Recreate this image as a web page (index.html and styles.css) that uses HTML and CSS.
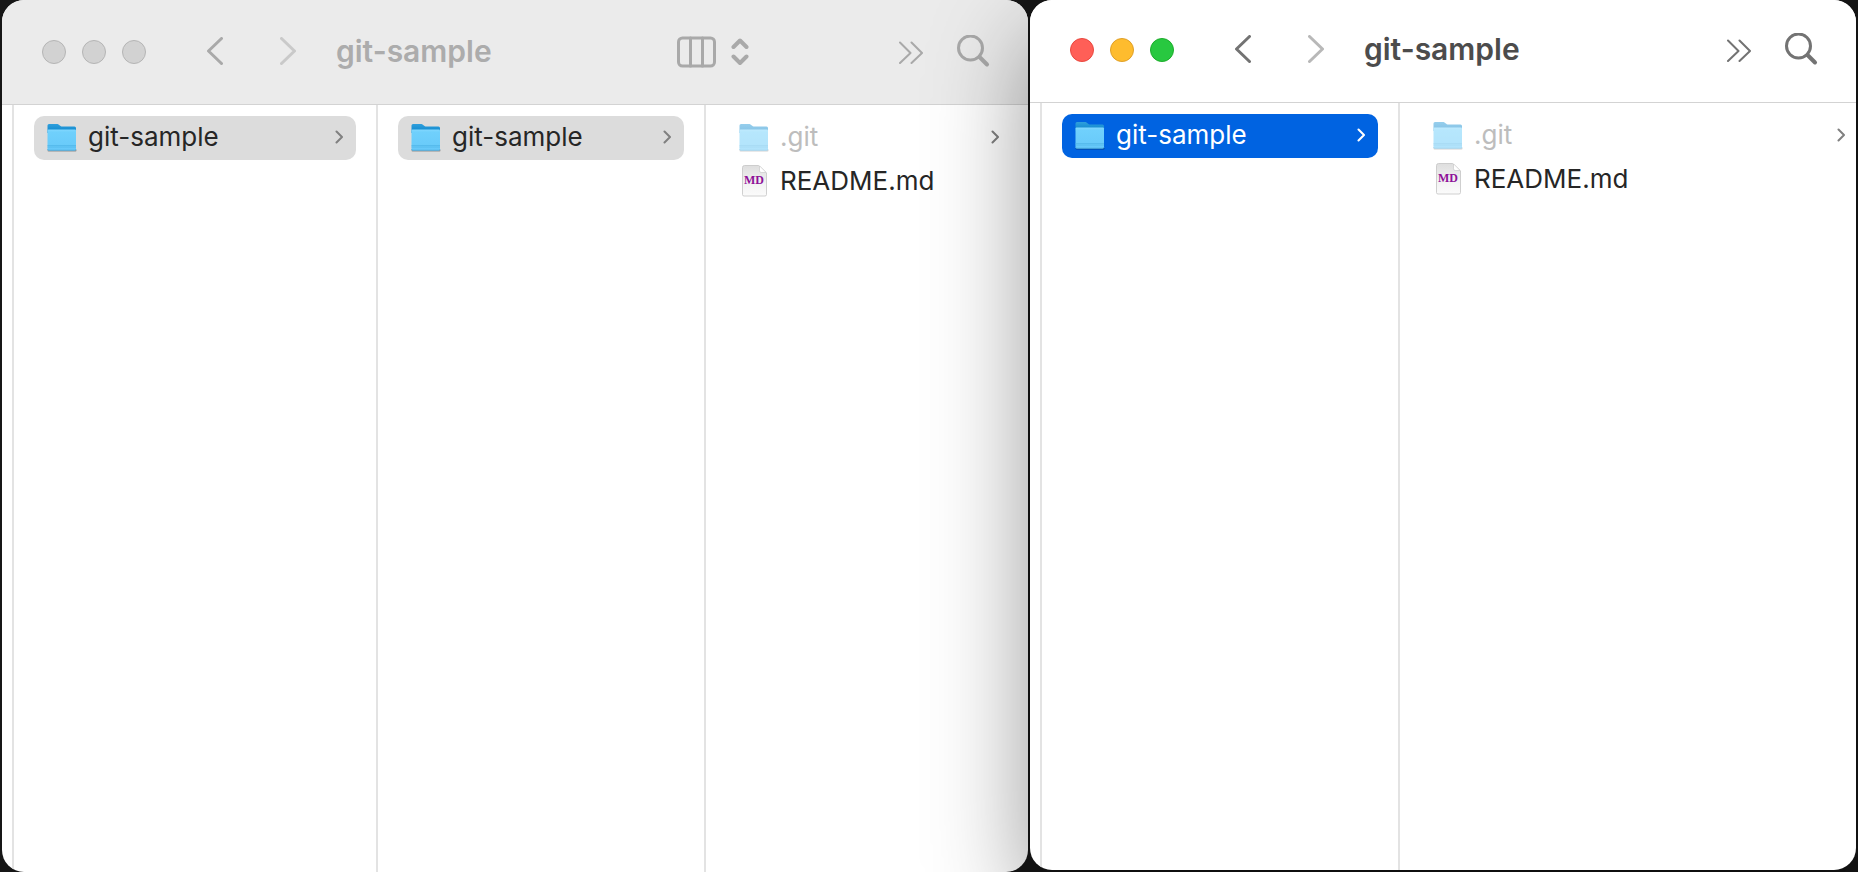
FILE: index.html
```
<!DOCTYPE html>
<html lang="en">
<head>
<meta charset="utf-8">
<meta name="viewport" content="width=device-width, initial-scale=1">
<title>git-sample</title>
<link rel="stylesheet" href="styles.css">
</head>
<body>
<svg class="defs" aria-hidden="true">
  <defs>
    <linearGradient id="folder-front" x1="0" y1="0" x2="0" y2="1">
      <stop offset="0" stop-color="#84d8fe"/>
      <stop offset="0.12" stop-color="#70d0fc"/>
      <stop offset="1" stop-color="#67c9f9"/>
    </linearGradient>
    <linearGradient id="folder-back" x1="0" y1="0" x2="0" y2="1">
      <stop offset="0" stop-color="#2f9fdc"/>
      <stop offset="1" stop-color="#0a84cb"/>
    </linearGradient>
    <linearGradient id="paper" x1="0" y1="0" x2="0" y2="1">
      <stop offset="0" stop-color="#dedede"/>
      <stop offset="0.6" stop-color="#f3f3f3"/>
      <stop offset="1" stop-color="#fbfbfb"/>
    </linearGradient>
    <symbol id="folder" viewBox="0 0 32 32">
      <path d="M2.500 29.500h27" stroke="#000" stroke-opacity=".35" stroke-width="2" stroke-linecap="round"/>
      <path d="M1.500 4.500q0-1.500 1.500-1.500h7.500c1.500 0 2 .4 3 1.300 1 .8 1.600 1.200 3 1.200H28.500q1.500 0 1.500 1.500V12H1.500z" fill="url(#folder-back)"/>
      <path d="M1.500 9.500q0-1 1-1h26.500q1 0 1 1V28q0 1.500-1.500 1.500H3q-1.500 0-1.500-1.500z" fill="url(#folder-front)"/>
      <path d="M1.500 24.500h28.500M1.500 26h28.500" stroke="#4fb4e6" stroke-width=".7"/>
      <path d="M1.500 28q0 1.200 1.500 1.200h25.500q1.500 0 1.500-1.200" fill="none" stroke="#4fb0e2" stroke-width=".8"/>
    </symbol>
    <symbol id="document" viewBox="0 0 32 32">
      <path d="M6.500 .5h14l8 7.500V29.500q0 1.500-1.500 1.500H6q-1.500 0-1.500-1.500V2.500q0-2 2-2z" fill="url(#paper)" stroke="#c4c4c4" stroke-width=".8"/>
      <path d="M21.500 .8v5q0 1.700 1.700 1.700h5z" fill="#fff" stroke="#c8c8c8" stroke-width=".7"/>
      <text x="16" y="19" text-anchor="middle" class="doc-label">MD</text>
    </symbol>
    <symbol id="chevron" viewBox="0 0 8 14">
      <path d="M1.500 1.500 7 7l-5.500 5.500"/>
    </symbol>
    <symbol id="back" viewBox="0 0 18 30">
      <path d="M15.500 1.500 2.500 14l13 12.500"/>
    </symbol>
    <symbol id="forward" viewBox="0 0 18 30">
      <path d="M2.500 1.500 15.500 14l-13 12.500"/>
    </symbol>
    <symbol id="more" viewBox="0 0 26 24">
      <path d="M2 2.500 12.500 13 2 23M13.500 2.500 24 13 13.500 23"/>
    </symbol>
    <symbol id="search" viewBox="0 0 34 34">
      <circle cx="14.500" cy="13" r="12"/>
      <path d="M23.500 22l7.500 7.500" stroke-width="4"/>
    </symbol>
    <symbol id="columns" viewBox="0 0 40 32">
      <rect x="1.500" y="2" width="36" height="28" rx="4"/>
      <path d="M13.500 2v28M25.500 2v28"/>
    </symbol>
    <symbol id="updown" viewBox="0 0 18 28">
      <path d="M2.500 9 9 2.500 15.500 9M2.500 18.500 9 25l6.500-6.500"/>
    </symbol>
  </defs>
</svg>

<main class="desktop">
  <section class="window window--inactive" aria-label="git-sample, inactive window">
    <header class="titlebar">
      <div class="lights">
        <button class="light" aria-label="Close"></button>
        <button class="light" aria-label="Minimize"></button>
        <button class="light" aria-label="Zoom"></button>
      </div>
      <div class="history">
        <button class="tool" aria-label="Back"><svg class="icon nav"><use href="#back"/></svg></button>
        <button class="tool tool--off" aria-label="Forward"><svg class="icon nav"><use href="#forward"/></svg></button>
      </div>
      <h1 class="title">git-sample</h1>
      <button class="tool view" aria-label="View as columns">
        <svg class="icon columns-icon"><use href="#columns"/></svg>
        <svg class="icon updown-icon"><use href="#updown"/></svg>
      </button>
      <div class="actions">
        <button class="tool" aria-label="More"><svg class="icon more-icon"><use href="#more"/></svg></button>
        <button class="tool" aria-label="Search"><svg class="icon search-icon"><use href="#search"/></svg></button>
      </div>
    </header>
    <div class="browser browser--three">
      <div class="column"></div>
      <div class="column">
        <a class="row row--selected" href="#"><svg class="file-icon"><use href="#folder"/></svg><span class="name">git-sample</span><svg class="icon chevron"><use href="#chevron"/></svg></a>
      </div>
      <div class="column">
        <a class="row row--selected" href="#"><svg class="file-icon"><use href="#folder"/></svg><span class="name">git-sample</span><svg class="icon chevron"><use href="#chevron"/></svg></a>
      </div>
      <div class="column column--last">
        <a class="row row--hidden" href="#"><svg class="file-icon"><use href="#folder"/></svg><span class="name">.git</span><svg class="icon chevron"><use href="#chevron"/></svg></a>
        <a class="row" href="#"><svg class="file-icon"><use href="#document"/></svg><span class="name">README.md</span></a>
      </div>
    </div>
  </section>

  <section class="window window--active" aria-label="git-sample, active window">
    <header class="titlebar">
      <div class="lights">
        <button class="light light--close" aria-label="Close"></button>
        <button class="light light--minimize" aria-label="Minimize"></button>
        <button class="light light--zoom" aria-label="Zoom"></button>
      </div>
      <div class="history">
        <button class="tool" aria-label="Back"><svg class="icon nav"><use href="#back"/></svg></button>
        <button class="tool tool--off" aria-label="Forward"><svg class="icon nav"><use href="#forward"/></svg></button>
      </div>
      <h1 class="title">git-sample</h1>
      <div class="actions">
        <button class="tool" aria-label="More"><svg class="icon more-icon"><use href="#more"/></svg></button>
        <button class="tool" aria-label="Search"><svg class="icon search-icon"><use href="#search"/></svg></button>
      </div>
    </header>
    <div class="browser browser--two">
      <div class="column"></div>
      <div class="column">
        <a class="row row--selected" href="#"><svg class="file-icon"><use href="#folder"/></svg><span class="name">git-sample</span><svg class="icon chevron"><use href="#chevron"/></svg></a>
      </div>
      <div class="column column--last">
        <a class="row row--hidden" href="#"><svg class="file-icon"><use href="#folder"/></svg><span class="name">.git</span><svg class="icon chevron"><use href="#chevron"/></svg></a>
        <a class="row" href="#"><svg class="file-icon"><use href="#document"/></svg><span class="name">README.md</span></a>
      </div>
    </div>
  </section>
</main>
</body>
</html>
```
FILE: styles.css
```
* {
  box-sizing: border-box;
}

body {
  margin: 0;
  background: #161616;
  color: #262626;
  font-family: Inter, "Liberation Sans", sans-serif;
}

.defs {
  position: absolute;
  width: 0;
  height: 0;
}

.desktop {
  display: grid;
  grid-template-columns: 1026fr 826fr;
  gap: 2px;
  min-height: 100vh;
  padding: 0 2px;
  overflow: hidden;
}

.window {
  display: flex;
  flex-direction: column;
  min-width: 0;
  overflow: hidden;
  border-radius: 22px;
  background: #fff;
  --bar-height: 105px;
  --bar-bottom: 0;
  --icon: #a9a9a9;
  --title: #acacac;
  --bar: #ebebeb;
  --selected: #dcdcdc;
  --selected-text: #262626;
  --selected-chevron: #808080;
}

.window--active {
  z-index: 1;
  margin-bottom: 2px;
  box-shadow: 0 36px 100px rgba(0, 0, 0, 0.42);
  --bar-height: 103px;
  --bar-bottom: 2px;
  --icon: #737373;
  --title: #4c4c4c;
  --bar: #fff;
  --selected: #0063e1;
  --selected-text: #fff;
  --selected-chevron: #fff;
}

.titlebar {
  display: flex;
  align-items: center;
  height: var(--bar-height);
  padding: 0 38px var(--bar-bottom) 40px;
  border-bottom: 1px solid #d3d3d3;
  background: var(--bar);
}

.lights {
  display: flex;
  gap: 16px;
}

.light {
  width: 24px;
  height: 24px;
  padding: 0;
  border: 1px solid #b5b5b5;
  border-radius: 50%;
  background: #d2d2d2;
}

.light--close {
  border-color: #e9483f;
  background: #ff5f57;
}

.light--minimize {
  border-color: #e0a028;
  background: #febc2e;
}

.light--zoom {
  border-color: #1dad2b;
  background: #28c840;
}

.history {
  display: flex;
  gap: 55px;
  margin-left: 60px;
}

.tool {
  display: flex;
  align-items: center;
  padding: 0;
  border: 0;
  background: none;
  color: var(--icon);
}

.tool--off {
  opacity: 0.5;
}

.icon {
  display: block;
  flex: none;
  fill: none;
  stroke: currentColor;
  stroke-linecap: round;
  stroke-linejoin: round;
  stroke-width: 3px;
}

.nav {
  width: 18px;
  height: 30px;
}

.title {
  margin: 0 0 0 39px;
  padding-bottom: 2px;
  color: var(--title);
  font-size: 30px;
  font-weight: 600;
  line-height: 36px;
}

.view {
  gap: 14px;
  margin-left: auto;
  margin-right: 149px;
}

.columns-icon {
  width: 40px;
  height: 32px;
}

.updown-icon {
  width: 18px;
  height: 28px;
  stroke-width: 4px;
}

.actions {
  display: flex;
  align-items: center;
  gap: 32px;
}

.window--active .actions {
  margin-left: auto;
}

.more-icon {
  width: 26px;
  height: 24px;
  stroke-width: 2px;
}

.search-icon {
  width: 34px;
  height: 34px;
}

.browser {
  display: grid;
  flex: 1;
}

.browser--three {
  grid-template-columns: 12px 364fr 328fr 322fr;
}

.browser--two {
  grid-template-columns: 12px 358fr 456fr;
}

.column {
  min-width: 0;
  padding: 11px 20px 0;
  border-right: 2px solid #e3e3e3;
}

.column:first-child {
  padding: 0;
}

.column--last {
  padding-right: 16px;
  border-right: 0;
}

.window--active .column--last {
  padding-right: 0;
}

.row {
  display: flex;
  align-items: center;
  height: 44px;
  padding: 0 13px 2px 12px;
  border-radius: 10px;
  color: #262626;
  font-size: 26px;
  line-height: 32px;
  text-decoration: none;
}

.window--active .row--hidden {
  padding-right: 11px;
}

.row--selected {
  background: var(--selected);
  color: var(--selected-text);
}

.file-icon {
  flex: none;
  width: 32px;
  height: 32px;
}

.row--hidden .file-icon {
  opacity: 0.5;
}

.row--hidden .name {
  color: #bdbdbd;
}

.name {
  flex: 1;
  margin-left: 10px;
}

.chevron {
  width: 8px;
  height: 14px;
  color: #808080;
  stroke-width: 2px;
}

.row--selected .chevron {
  color: var(--selected-chevron);
}

.doc-label {
  fill: #8e1198;
  font-family: "Liberation Serif", serif;
  font-size: 12px;
  font-weight: 700;
}
```
